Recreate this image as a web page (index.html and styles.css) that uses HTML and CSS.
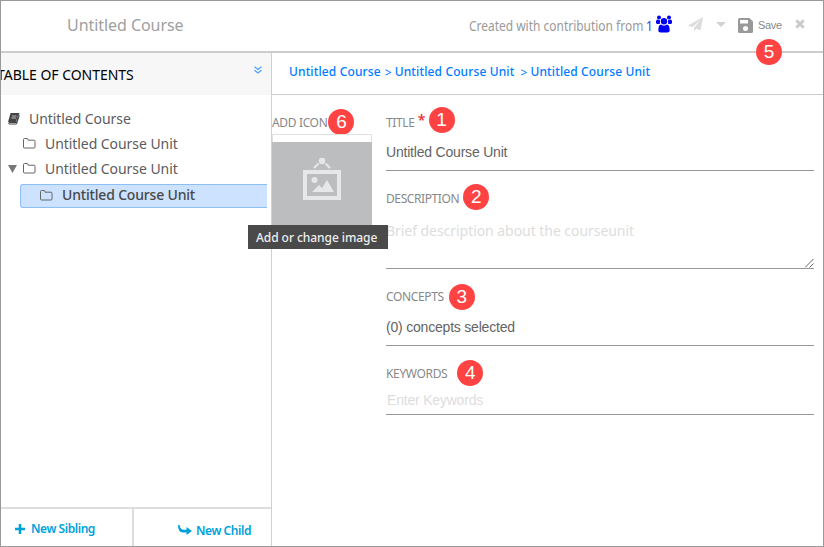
FILE: index.html
```html
<!DOCTYPE html>
<html lang="en">
<head>
<meta charset="utf-8">
<title>Untitled Course</title>
<link rel="stylesheet" href="styles.css">
</head>
<body>
<div class="app">
  <i class="frame-gap"></i>
  <header class="topbar">
    <h1 class="course-title">Untitled Course</h1>
    <div class="credits"><span class="credits-text">Created with contribution from</span><b class="count">1</b></div>
    <svg class="users" width="16" height="18" viewBox="0 0 16 18"><g fill="#0000f5"><circle cx="3" cy="2.4" r="2"/><circle cx="13" cy="2.4" r="2"/><path d="M0 8V6.2Q0 4.8 1.5 4.6L4 5.2 3.8 9H2Q0 9 0 8zM16 8V6.2Q16 4.8 14.5 4.6L12 5.2 12.200 9H14Q16 9 16 8z"/><circle cx="8" cy="6.300" r="3.200"/><path d="M2.300 15.500Q2.300 9.500 5 9.500 8 11.800 11 9.500 13.700 9.500 13.700 15.500 13.700 17.500 11.500 17.500H4.500Q2.300 17.500 2.300 15.500z"/></g></svg>
    <svg class="plane" width="15" height="15" viewBox="0 0 15 15"><path d="M15 0L12.500 13.500 8.300 11.500 6 14.800V10.700L13 2.500 4.500 10 0 8.500z" fill="#dcdcdc"/></svg>
    <svg class="caret" width="10" height="5" viewBox="0 0 10 5"><path d="M0 0H10L5 5z" fill="#d2d2d2"/></svg>
    <svg class="disk" width="15" height="15" viewBox="0 0 15 15"><path fill="#999" fill-rule="evenodd" d="M1.500 0H11.500L15 3.500V13.500Q15 15 13.500 15H1.500Q0 15 0 13.500V1.500Q0 0 1.500 0zM2 2V5.500H10V2zM7.500 8A2.500 2.500 0 1 0 7.500 13 2.500 2.500 0 1 0 7.500 8z"/></svg>
    <span class="save">Save<em class="badge badge-save">5</em></span>
    <svg class="close" width="10" height="10" viewBox="0 0 10 10"><path d="M1.300 1.300L8.700 8.700M8.700 1.300L1.300 8.700" stroke="#ccc" stroke-width="3"/></svg>
  </header>
  <div class="body">
    <aside class="sidebar">
      <div class="toc-head"><span class="toc-title">TABLE OF CONTENTS</span>
        <svg class="chevrons" width="8" height="8" viewBox="0 0 8 8"><path d="M.5.700L4 3.500 7.500.700M.5 4.200L4 7 7.500 4.200" fill="none" stroke="#4da3ff" stroke-width="1.300"/></svg>
      </div>
      <div class="tree">
        <div class="node root"><svg width="13" height="12" viewBox="0 0 13 12"><path d="M3.500.5H12L9.500 9.500H2Q1 10.500 2 11H9.500L12.300 2.500" fill="none" stroke="#444"/><path d="M3.500.5H11.500L9 9H1z" fill="#444"/><path d="M5 3H9.500M4.400 5H9" stroke="#ddd" stroke-width=".8"/></svg><span>Untitled Course</span></div>
        <div class="node"><svg width="13" height="11" viewBox="0 0 13 11"><path d="M.5 9V1.500Q.5.500 1.500.5H4Q5 .5 5 1.500V2.200H11Q12 2.200 12 3.200V9Q12 10 11 10H1.500Q.5 10 .5 9z" fill="none" stroke="#666"/></svg><span>Untitled Course Unit</span></div>
        <div class="node open"><svg class="expander" width="9" height="8" viewBox="0 0 9 8"><path d="M0 0H9L4.500 8z" fill="#777"/></svg><svg width="13" height="11" viewBox="0 0 13 11"><path d="M.5 9V1.500Q.5.500 1.500.5H4Q5 .5 5 1.500V2.200H11Q12 2.200 12 3.200V9Q12 10 11 10H1.500Q.5 10 .5 9z" fill="none" stroke="#666"/></svg><span>Untitled Course Unit</span></div>
        <div class="node active"><svg width="13" height="11" viewBox="0 0 13 11"><path d="M.5 9V1.500Q.5.500 1.500.5H4Q5 .5 5 1.500V2.200H11Q12 2.200 12 3.200V9Q12 10 11 10H1.500Q.5 10 .5 9z" fill="none" stroke="#666"/></svg><span>Untitled Course Unit</span></div>
      </div>
      <div class="actions">
        <div class="sibling"><svg width="10" height="10" viewBox="0 0 10 10"><path d="M5 0V10M0 5H10" stroke="#00a1db" stroke-width="2.600"/></svg><span>New Sibling</span></div>
        <div class="child"><svg width="14" height="10" viewBox="0 0 14 10"><path d="M0 0H1.600Q2 4.800 6 4.800H8.500V2L14 6 8.500 10V7.500H5Q0 7.500 0 0z" fill="#00a1db"/></svg><span>New Child</span></div>
      </div>
    </aside>
    <main class="main">
      <nav class="crumbs"><a>Untitled Course</a><i>&gt;</i><a>Untitled Course Unit</a><i class="wide">&gt;</i><a>Untitled Course Unit</a></nav>
      <div class="content">
        <section class="icon-field">
          <div class="label"><span class="l-icon">ADD ICON</span><em class="badge b6">6</em></div>
          <div class="thumb">
            <div class="picture"><svg width="40" height="44" viewBox="0 0 40 44"><g fill="#e6e7e8"><circle cx="20" cy="4" r="3.200"/><path d="M1 13H39V43H1zM5 17V39H35V17z" fill-rule="evenodd"/><circle cx="12.500" cy="23" r="3"/><path d="M10 35L17 28 20 31 25 23 32 35z"/></g><path d="M16.500 6.500L12 11M23.500 6.500L28 11" stroke="#e6e7e8" stroke-width="2.200"/></svg></div>
            <div class="tooltip"><span>Add or change image</span></div>
          </div>
        </section>
        <section class="form">
          <div class="label"><span class="l-title">TITLE</span><sup>*</sup><em class="badge b1">1</em></div>
          <div class="value v-title"><span>Untitled Course Unit</span></div>
          <div class="label"><span class="l-desc">DESCRIPTION</span><em class="badge b2">2</em></div>
          <div class="value v-desc"><span>Brief description about the courseunit</span><svg class="grip" width="9" height="9" viewBox="0 0 9 9"><path d="M0 8.500L8.500 0M4.500 8.500L8.500 4.500" stroke="#555" stroke-width=".9"/></svg></div>
          <div class="label"><span class="l-concepts">CONCEPTS</span><em class="badge b3">3</em></div>
          <div class="value v-concepts"><span>(0) concepts selected</span></div>
          <div class="label"><span class="l-keys">KEYWORDS</span><em class="badge b4">4</em></div>
          <div class="value v-keys"><span>Enter Keywords</span></div>
        </section>
      </div>
    </main>
  </div>
</div>
</body>
</html>
```
FILE: styles.css
```css
* { box-sizing: border-box; }
body { margin: 0; background: #fff; font-family: "Noto Sans", sans-serif; }
svg { display: block; flex: none; }
.app { position: relative; width: 824px; height: 547px; border: 1px solid #999; display: flex; flex-direction: column; overflow: hidden; }
.frame-gap { position: absolute; top: -1px; left: 435px; width: 243px; height: 1px; background: #fff; }
.topbar { height: 52px; flex: none; border-bottom: 2px solid #ccc; display: flex; align-items: flex-start; white-space: nowrap; }
.course-title { margin: 14px 0 0 66px; width: 402px; font-size: 16px; line-height: 20px; font-weight: 400; color: #a0a0a0; letter-spacing: -.06px; }
.credits { margin-top: 14px; width: 187px; display: flex; font-size: 14px; line-height: 22px; color: #999; }
.credits-text { width: 177px; flex: none; transform: scaleX(.854); transform-origin: left; }
.count { font-weight: 400; color: #4040f5; width: 10px; transform: scaleX(.85); transform-origin: left; }
.users { margin-top: 14px; }
.plane { margin: 16px 0 0 16px; }
.caret { margin: 21px 0 0 13px; }
.disk { margin: 17px 0 0 12px; }
.save { position: relative; margin: 17px 0 0 5px; width: 24px; font: 11px/15px "Liberation Sans", sans-serif; color: #888; letter-spacing: -.3px; }
.close { margin: 18px 0 0 13px; }
.badge { width: 26px; height: 26px; flex: none; border-radius: 50%; background: #ff4343; color: #fff; font: 19px/26px "Liberation Sans", sans-serif; letter-spacing: 0; text-align: center; }
.badge-save { position: absolute; left: -2px; top: 21px; }
.body { flex: 1; display: flex; min-height: 0; }
.sidebar { width: 271px; flex: none; border-right: 1px solid #d0d0d0; display: flex; flex-direction: column; }
.toc-head { height: 42px; background: #f7f7f7; display: flex; justify-content: space-between; overflow: hidden; white-space: nowrap; }
.toc-title { margin: 12px 0 0 -4px; font-size: 14px; line-height: 20px; color: #000; letter-spacing: -.03px; }
.chevrons { margin: 13px 9px 0 0; }
.tree { flex: 1; padding-top: 11px; color: #5c5c5c; font-size: 14px; line-height: 20px; white-space: nowrap; }
.tree span { letter-spacing: -.06px; }
.node { height: 25px; display: flex; align-items: center; gap: 9px; padding-left: 22px; }
.root { padding-left: 6px; }
.open { gap: 0; padding-left: 7px; }
.open .expander { margin-right: 6px; }
.open span { margin-left: 9px; }
.active { margin: 3px 4px 0 19px; height: 24px; padding-left: 19px; border: 1px solid #8cbefa; border-right: 0; border-radius: 3px 0 0 3px; background: #cce2ff; color: #484848; font-weight: 500; }
.active span { letter-spacing: -.18px; margin-top: -2px; }
.active svg { margin-top: -2px; }
.actions { height: 39px; display: flex; border-top: 2px solid #ddd; font-size: 12px; font-weight: 600; color: #00a1db; line-height: 16px; white-space: nowrap; }
.actions span { letter-spacing: -.45px; }
.sibling { width: 133px; border-right: 2px solid #ddd; display: flex; align-items: center; gap: 6px; padding: 2px 0 0 14px; }
.child { display: flex; align-items: center; gap: 4px; padding: 6px 0 0 44px; }
.child svg { margin-top: -2px; }
.main { flex: 1; min-width: 0; }
.crumbs { height: 42px; border-bottom: 1px solid #ccc; padding: 10px 0 0 17px; display: flex; font-size: 12px; line-height: 18px; font-weight: 500; color: #007bff; letter-spacing: .13px; white-space: nowrap; }
.crumbs i { font-style: normal; font-weight: 400; margin: 1px 3px 0 4px; }
.crumbs .wide { margin-left: 6px; margin-right: 3px; }
.content { display: flex; }
.icon-field { width: 100px; flex: none; padding-top: 20px; }
.label { height: 16px; display: flex; align-items: center; font-size: 12px; line-height: 16px; color: #888; letter-spacing: -.35px; white-space: nowrap; }
.l-desc { letter-spacing: -.4px; }
.thumb { position: relative; margin-top: 3px; border: 1px solid #e2e2e2; border-bottom: 0; padding-top: 7px; height: 92px; }
.picture { margin: 0 -1px; height: 84px; background: #bcbdbf; display: flex; padding: 15px 0 0 30px; }
.tooltip { position: absolute; left: -25px; top: 90px; width: 140px; height: 24px; background: #4a4a4a; color: #eee; font-size: 12px; line-height: 25px; padding-left: 8px; white-space: nowrap; font-weight: 500; letter-spacing: -.06px; }
.form { width: 428px; margin-left: 14px; padding-top: 20px; }
.form sup { align-self: flex-start; width: 6px; margin: -4px 0 0 3px; font-size: 14px; line-height: 18px; font-weight: 600; color: #e33; vertical-align: baseline; }
.b1 { margin: -6px 0 0 5px; }
.b2 { margin: -4px 0 0 4px; }
.b3 { margin-left: 5px; }
.b4 { margin: -2px 0 0 10px; }
.b6 { margin: -2px 0 0 1px; }
.value { border-bottom: 1px solid #999; margin-bottom: 20px; font: 14px/20px "Liberation Sans", sans-serif; color: #646464; letter-spacing: -.2px; white-space: nowrap; }
.v-title { height: 40px; padding-top: 11px; }
.v-desc { height: 62px; padding-top: 14px; font-family: "Noto Sans", sans-serif; letter-spacing: -.05px; color: #ddd; display: flex; justify-content: space-between; }
.v-desc .grip { align-self: flex-end; }
.v-concepts { height: 41px; padding-top: 12px; }
.v-keys { height: 33px; padding: 8px 0 0 1px; color: #ddd; }
```
